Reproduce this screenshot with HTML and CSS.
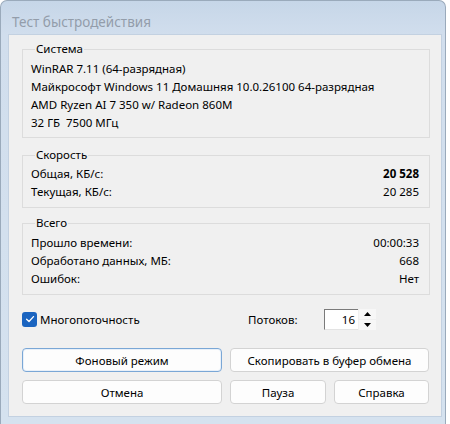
FILE: index.html
```html
<!DOCTYPE html>
<html lang="ru">
<head>
<meta charset="utf-8">
<title>Тест быстродействия</title>
<link rel="stylesheet" href="styles.css">
</head>
<body>
<div class="window">
  <div class="titlebar">Тест быстродействия</div>
  <div class="client">
    <fieldset class="group g-system">
      <legend>Система</legend>
      <div class="row">WinRAR 7.11 (64-разрядная)</div>
      <div class="row">Майкрософт Windows 11 Домашняя 10.0.26100 64-разрядная</div>
      <div class="row">AMD Ryzen AI 7 350 w/ Radeon 860M</div>
      <div class="row">32 ГБ&nbsp; 7500 МГц</div>
    </fieldset>
    <fieldset class="group g-speed">
      <legend>Скорость</legend>
      <div class="row kv"><span>Общая, КБ/с:</span><span class="val bold">20 528</span></div>
      <div class="row kv"><span>Текущая, КБ/с:</span><span class="val">20 285</span></div>
    </fieldset>
    <fieldset class="group g-total">
      <legend>Всего</legend>
      <div class="row kv"><span>Прошло времени:</span><span class="val">00:00:33</span></div>
      <div class="row kv"><span>Обработано данных, МБ:</span><span class="val">668</span></div>
      <div class="row kv"><span>Ошибок:</span><span class="val">Нет</span></div>
    </fieldset>
    <div class="options">
      <div class="check">
        <span class="box"><svg width="14" height="14" viewBox="0 0 14 14"><path d="M3.6 7.2 L6 9.5 L10.5 4.6" fill="none" stroke="#fff" stroke-width="1.3" stroke-linecap="round" stroke-linejoin="round"/></svg></span>
        <span class="check-label">Многопоточность</span>
      </div>
      <div class="threads">
        <span class="threads-label">Потоков:</span>
        <span class="spin-edit">16</span>
        <span class="spin-btns">
          <span class="spin-btn"><svg width="7" height="4" viewBox="0 0 7 4"><path d="M0 4 L3.5 0 L7 4 Z" fill="#000"/></svg></span>
          <span class="spin-btn"><svg width="7" height="4" viewBox="0 0 7 4"><path d="M0 0 L3.5 4 L7 0 Z" fill="#000"/></svg></span>
        </span>
      </div>
    </div>
    <div class="buttons">
      <div class="btn-row">
        <button class="btn btn-default w-wide">Фоновый режим</button>
        <button class="btn w-wide2">Скопировать в буфер обмена</button>
      </div>
      <div class="btn-row">
        <button class="btn w-wide">Отмена</button>
        <button class="btn w-pause">Пауза</button>
        <button class="btn w-help">Справка</button>
      </div>
    </div>
  </div>
</div>
</body>
</html>
```
FILE: styles.css
```css
html, body {
  margin: 0;
  padding: 0;
  background: #ffffff;
}
body {
  font-family: "Noto Sans", "Open Sans", sans-serif;
  font-size: 11.5px;
  color: #000;
}
.window {
  width: 444px;
  height: 423px;
  border: 1px solid #9aaabb;
  border-bottom: none;
  border-radius: 7px 7px 0 0;
  background: linear-gradient(to bottom, #c6d6e8 0px, #d1deed 34px, #d5e2ef 100%);
  display: flex;
  flex-direction: column;
}
.titlebar {
  height: 33px;
  box-sizing: border-box;
  padding: 11px 0 0 11px;
  font-size: 13.5px;
  line-height: 20px;
  color: #939daa;
}
.client {
  margin: 0 3px 7px 7px;
  flex: 1;
  background: #f0f0f0;
  border: 1px solid #c3d1e1;
  box-sizing: border-box;
  padding: 7px 11px 0 13px;
  display: flex;
  flex-direction: column;
}
.group {
  margin: 0;
  border: 1px solid #dcdcdc;
  padding: 4px 10px 5px 8px;
  min-width: 0;
}
.group legend {
  padding: 0 1px;
  margin-left: 4px;
  line-height: 14px;
}
.g-speed {
  margin-top: 10px;
  padding-top: 3px;
  padding-bottom: 6px;
}
.g-total {
  margin-top: 8px;
  padding-top: 4px;
  padding-bottom: 6px;
}
.row {
  line-height: 18px;
  height: 18px;
  white-space: nowrap;
}
.kv {
  display: flex;
  justify-content: space-between;
}
.bold {
  font-weight: bold;
}
.options {
  display: flex;
  align-items: center;
  height: 22px;
  margin-top: 13px;
}
.check {
  display: flex;
  align-items: center;
  width: 226px;
}
.box {
  width: 15px;
  height: 15px;
  border-radius: 3px;
  background: #1a64c0;
  display: flex;
  align-items: center;
  justify-content: center;
}
.check-label {
  margin-left: 3px;
}
.threads {
  display: flex;
  align-items: center;
}
.threads-label {
  width: 76px;
}
.spin-edit {
  width: 34px;
  height: 21px;
  box-sizing: border-box;
  border-top: 1px solid #7a7a7a;
  border-left: 1px solid #7a7a7a;
  border-bottom: 1px solid #e3e3e3;
  background: #fff;
  text-align: right;
  padding-right: 3px;
  line-height: 19px;
}
.spin-btns {
  display: flex;
  flex-direction: column;
  margin-left: 1px;
  height: 21px;
  gap: 1px;
}
.spin-btn {
  width: 17px;
  height: 10px;
  background: #f7f7f7;
  display: flex;
  align-items: center;
  justify-content: center;
}
.buttons {
  display: flex;
  flex-direction: column;
  gap: 8px;
  margin-top: 18px;
}
.btn-row {
  display: flex;
  gap: 8px;
}
.btn {
  height: 24px;
  box-sizing: border-box;
  font-family: "Noto Sans", "Open Sans", sans-serif;
  font-size: 11.5px;
  color: #000;
  background: #fdfdfd;
  border: 1px solid #d3d3d3;
  border-radius: 4px;
  padding: 0;
}
.btn-default {
  border-color: #7aa7d6;
  box-shadow: inset 0 0 0 1px #e8f0f9;
}
.w-wide { width: 200px; }
.w-wide2 { width: 199px; }
.w-pause { width: 96px; }
.w-help { width: 95px; }
```
